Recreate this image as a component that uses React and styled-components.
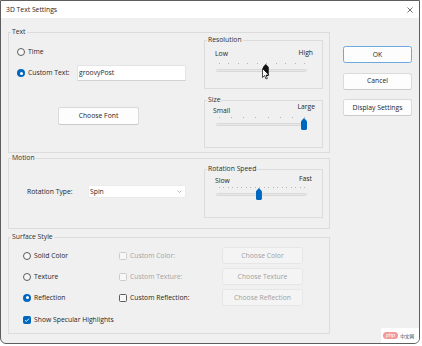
import React from "react";
import styled, { createGlobalStyle } from "styled-components";

const GlobalStyle = createGlobalStyle`
  html, body {
    margin: 0;
    padding: 0;
    background: #ffffff;
  }
  body {
    font-family: "Open Sans", "Noto Sans", sans-serif;
    font-size: 6.8px;
    color: #262626;
  }
  * {
    box-sizing: border-box;
  }
`;

const resolutionTicks = 10;
const sizeTicks = 8;
const speedTicks = 20;

const Window = styled.div`
  position: relative;
  width: 420px;
  height: 344px;
  border: 1px solid #5e5e5e;
  border-radius: 0 0 6px 6px;
  background: #f0f0f0;
  display: flex;
  flex-direction: column;
  overflow: hidden;
`;

const TitleBar = styled.div`
  height: 17px;
  background: #ffffff;
  display: flex;
  align-items: center;
  justify-content: space-between;
  padding: 0 6px 0 5px;
  line-height: 10px;
`;

const Body = styled.div`
  display: flex;
  padding: 14px 0 0 7px;
`;

const LeftCol = styled.div`
  width: 322px;
  display: flex;
  flex-direction: column;
`;

const RightCol = styled.div`
  width: 69px;
  margin-left: 13px;
  padding-top: 14px;
  display: flex;
  flex-direction: column;
  gap: 9.5px;
`;

const Group = styled.div`
  position: relative;
  border: 1px solid #dcdcdc;
  height: ${(p) => p.$h}px;
  width: ${(p) => (p.$w ? `${p.$w}px` : "auto")};
  margin-top: ${(p) => p.$top || 0}px;
  display: flex;
  flex-direction: ${(p) => (p.$column ? "column" : "row")};
`;

const Legend = styled.span`
  position: absolute;
  top: -6px;
  left: 2px;
  padding: 0 1px;
  line-height: 10px;
  background: #f0f0f0;
  color: #2e2e2e;
`;

const TextLeft = styled.div`
  width: 195px;
  display: flex;
  flex-direction: column;
  padding: 14px 0 0 8px;
`;

const SideCol = styled.div`
  width: 119px;
  margin-top: ${(p) => p.$top}px;
  display: flex;
  flex-direction: column;
  gap: 11px;
`;

const OptionRow = styled.div`
  display: flex;
  align-items: center;
  gap: 3px;
  height: ${(p) => p.$h || 10}px;
  margin-top: ${(p) => p.$top || 0}px;
  line-height: 10px;
  color: ${(p) => (p.$disabled ? "#a3a3a3" : "#262626")};
`;

const Radio = styled.span`
  position: relative;
  width: 8px;
  height: 8px;
  flex: none;
  border-radius: 50%;
  border: ${(p) => (p.$checked ? "none" : "1px solid #5c5c5c")};
  background: ${(p) => (p.$checked ? "#0067c0" : "#f7f7f7")};

  &::after {
    content: "";
    display: ${(p) => (p.$checked ? "block" : "none")};
    position: absolute;
    left: 2.5px;
    top: 2.5px;
    width: 3px;
    height: 3px;
    border-radius: 50%;
    background: #ffffff;
  }
`;

const Box = styled.span`
  width: 8px;
  height: 8px;
  flex: none;
  border-radius: 1.5px;
  display: flex;
  align-items: center;
  justify-content: center;
  border: 1px solid
    ${(p) => (p.$checked ? "#0067c0" : p.$disabled ? "#cdcdcd" : "#5c5c5c")};
  background: ${(p) => (p.$checked ? "#0067c0" : "#f7f7f7")};
`;

const FieldLabel = styled.span`
  width: ${(p) => p.$w}px;
  flex: none;
`;

const TextInput = styled.div`
  width: 109px;
  height: 16px;
  background: #ffffff;
  border: 1px solid #e4e4e4;
  border-bottom-color: #d2d2d2;
  display: flex;
  align-items: center;
  padding-left: 1px;
`;

const Button = styled.div`
  width: ${(p) => p.$w || 69}px;
  height: ${(p) => p.$h || 17}px;
  margin-left: ${(p) => p.$left || 0}px;
  margin-top: ${(p) => p.$top || 0}px;
  display: flex;
  align-items: center;
  justify-content: center;
  border-radius: 2.5px;
  border: 1px solid ${(p) => (p.$default ? "#6ea8dc" : p.$disabled ? "#e6e6e6" : "#dadada")};
  border-bottom-color: ${(p) => (p.$default ? "#6ea8dc" : p.$disabled ? "#e6e6e6" : "#cacaca")};
  background: ${(p) => (p.$disabled ? "#f4f4f4" : "#fdfdfd")};
  color: ${(p) => (p.$disabled ? "#a0a0a0" : "#262626")};
  line-height: 10px;
`;

const SliderLabels = styled.div`
  display: flex;
  justify-content: space-between;
  align-items: flex-start;
  height: ${(p) => p.$h}px;
  margin-top: ${(p) => p.$top}px;
  padding: 0 ${(p) => p.$pr}px 0 ${(p) => p.$pl}px;
  line-height: 10px;
`;

const SliderLabel = styled.span`
  margin-top: ${(p) => p.$dy || 0}px;
`;

const Slider = styled.div`
  position: relative;
  width: 91px;
  height: 14px;
  margin: ${(p) => p.$top}px 0 0 11px;
`;

const Tick = styled.span`
  position: absolute;
  top: 0;
  width: 1px;
  height: 1px;
  background: #b4b4b4;
`;

const Track = styled.div`
  position: absolute;
  left: 0;
  right: 0;
  top: 6px;
  height: 3px;
  border-radius: 1.5px;
  background: #e7e7e7;
  border: 1px solid #d9d9d9;
`;

const Thumb = styled.div`
  position: absolute;
  top: ${(p) => p.$y}px;
  width: 6px;
  height: 12px;
  margin-left: -3px;
  background: ${(p) => p.$color};
  clip-path: polygon(50% 0, 100% 28%, 100% 90%, 85% 100%, 15% 100%, 0 90%, 0 28%);
`;

const Cursor = styled.svg`
  position: absolute;
  left: 46px;
  top: 5px;
`;

const MotionLeft = styled.div`
  width: 195px;
  padding: 26px 0 0 18px;
  display: flex;
  align-items: flex-start;
`;

const Combo = styled.div`
  width: 98px;
  height: 13px;
  background: #ffffff;
  border: 1px solid #ececec;
  display: flex;
  align-items: center;
  justify-content: space-between;
  padding: 0 3px 0 1px;
  line-height: 10px;
`;

const SurfaceGrid = styled.div`
  display: grid;
  grid-template-columns: 96px 103px 81px;
  grid-auto-rows: 17px;
  row-gap: 4px;
  padding: 9px 0 0 14px;
  align-items: center;
`;

const Watermark = styled.div`
  position: absolute;
  right: 0;
  bottom: 0;
  width: 38px;
  height: 15px;
  background: #ffffff;
  border-radius: 2px 0 0 0;
  display: flex;
  align-items: center;
  gap: 2px;
  padding-left: 2px;
  font-size: 4.6px;
  line-height: 6px;
  color: #333;
  font-family: "Noto Sans CJK SC", "Noto Sans", sans-serif;
`;

const Pill = styled.span`
  background: #f29a9a;
  color: #ffffff;
  border-radius: 4px;
  padding: 0 3px;
  font-style: italic;
  font-family: "Liberation Sans", sans-serif;
  font-size: 5.5px;
  line-height: 7px;
`;

const CheckMark = () => (
  <svg width="6" height="6" viewBox="0 0 6 6">
    <polyline points="1,3.2 2.4,4.5 5,1.6" fill="none" stroke="#ffffff" strokeWidth="0.9" />
  </svg>
);

const TrackSlider = ({ ticks, value, color, top, children }) => (
  <Slider $top={top}>
    {Array.from({ length: ticks }).map((_, i) => (
      <Tick key={i} style={{ left: 3 + (85 * i) / (ticks - 1) }} />
    ))}
    <Track />
    <Thumb $color={color} $y={1} style={{ left: 3 + 85 * value }} />
    {children}
  </Slider>
);

const App = () => {
  return (
    <>
      <GlobalStyle />
      <Window>
        <TitleBar>
          <span>3D Text Settings</span>
          <svg width="6" height="6" viewBox="0 0 6 6">
            <path d="M0.5 0.5L5.5 5.5M5.5 0.5L0.5 5.5" stroke="#333" strokeWidth="0.7" />
          </svg>
        </TitleBar>
        <Body>
          <LeftCol>
            <Group $h={121} $top={0}>
              <Legend>Text</Legend>
              <TextLeft>
                <OptionRow>
                  <Radio />
                  Time
                </OptionRow>
                <OptionRow $h={16} $top={8}>
                  <Radio $checked />
                  <FieldLabel $w={46}>Custom Text:</FieldLabel>
                  <TextInput>groovyPost</TextInput>
                </OptionRow>
                <Button $w={81} $h={18} $left={41} $top={26}>
                  Choose Font
                </Button>
              </TextLeft>
              <SideCol $top={7}>
                <Group $h={49} $w={119} $column>
                  <Legend>Resolution</Legend>
                  <SliderLabels $h={11} $top={7} $pl={10} $pr={9}>
                    <SliderLabel $dy={1}>Low</SliderLabel>
                    <SliderLabel>High</SliderLabel>
                  </SliderLabels>
                  <TrackSlider ticks={resolutionTicks} value={0.55} color="#111111" top={4}>
                    <Cursor width="8" height="12" viewBox="0 0 8 12">
                      <path
                        d="M0.5 0.5L0.5 9.5L2.6 7.6L4 11L5.4 10.4L4 7.1L7 7.1Z"
                        fill="#ffffff"
                        stroke="#000000"
                        strokeWidth="0.7"
                      />
                    </Cursor>
                  </TrackSlider>
                </Group>
                <Group $h={48} $w={119} $column>
                  <Legend>Size</Legend>
                  <SliderLabels $h={14} $top={1} $pl={8} $pr={7}>
                    <SliderLabel $dy={4}>Small</SliderLabel>
                    <SliderLabel>Large</SliderLabel>
                  </SliderLabels>
                  <TrackSlider ticks={sizeTicks} value={1} color="#0067c0" top={1} />
                </Group>
              </SideCol>
            </Group>

            <Group $h={71} $top={5}>
              <Legend>Motion</Legend>
              <MotionLeft>
                <OptionRow $h={13}>
                  <FieldLabel $w={58}>Rotation Type:</FieldLabel>
                  <Combo>
                    Spin
                    <svg width="5" height="3" viewBox="0 0 5 3">
                      <polyline points="0.5,0.5 2.5,2.5 4.5,0.5" fill="none" stroke="#8a8a8a" strokeWidth="0.6" />
                    </svg>
                  </Combo>
                </OptionRow>
              </MotionLeft>
              <SideCol $top={10}>
                <Group $h={49} $w={119} $column>
                  <Legend>Rotation Speed</Legend>
                  <SliderLabels $h={12} $top={4} $pl={10} $pr={10}>
                    <SliderLabel $dy={2}>Slow</SliderLabel>
                    <SliderLabel>Fast</SliderLabel>
                  </SliderLabels>
                  <TrackSlider ticks={speedTicks} value={0.47} color="#0067c0" top={1} />
                </Group>
              </SideCol>
            </Group>

            <Group $h={97} $top={8} $column>
              <Legend>Surface Style</Legend>
              <SurfaceGrid>
                <OptionRow>
                  <Radio />
                  Solid Color
                </OptionRow>
                <OptionRow $disabled>
                  <Box $disabled />
                  Custom Color:
                </OptionRow>
                <Button $w={81} $disabled>
                  Choose Color
                </Button>

                <OptionRow>
                  <Radio />
                  Texture
                </OptionRow>
                <OptionRow $disabled>
                  <Box $disabled />
                  Custom Texture:
                </OptionRow>
                <Button $w={81} $disabled>
                  Choose Texture
                </Button>

                <OptionRow>
                  <Radio $checked />
                  Reflection
                </OptionRow>
                <OptionRow>
                  <Box />
                  Custom Reflection:
                </OptionRow>
                <Button $w={81} $disabled>
                  Choose Reflection
                </Button>

                <OptionRow $top={2} style={{ gridColumn: "1 / 3" }}>
                  <Box $checked>
                    <CheckMark />
                  </Box>
                  Show Specular Highlights
                </OptionRow>
              </SurfaceGrid>
            </Group>
          </LeftCol>

          <RightCol>
            <Button $default>OK</Button>
            <Button>Cancel</Button>
            <Button>Display Settings</Button>
          </RightCol>
        </Body>
        <Watermark>
          <Pill>php</Pill>
          中文网
        </Watermark>
      </Window>
    </>
  );
};

export default App;
